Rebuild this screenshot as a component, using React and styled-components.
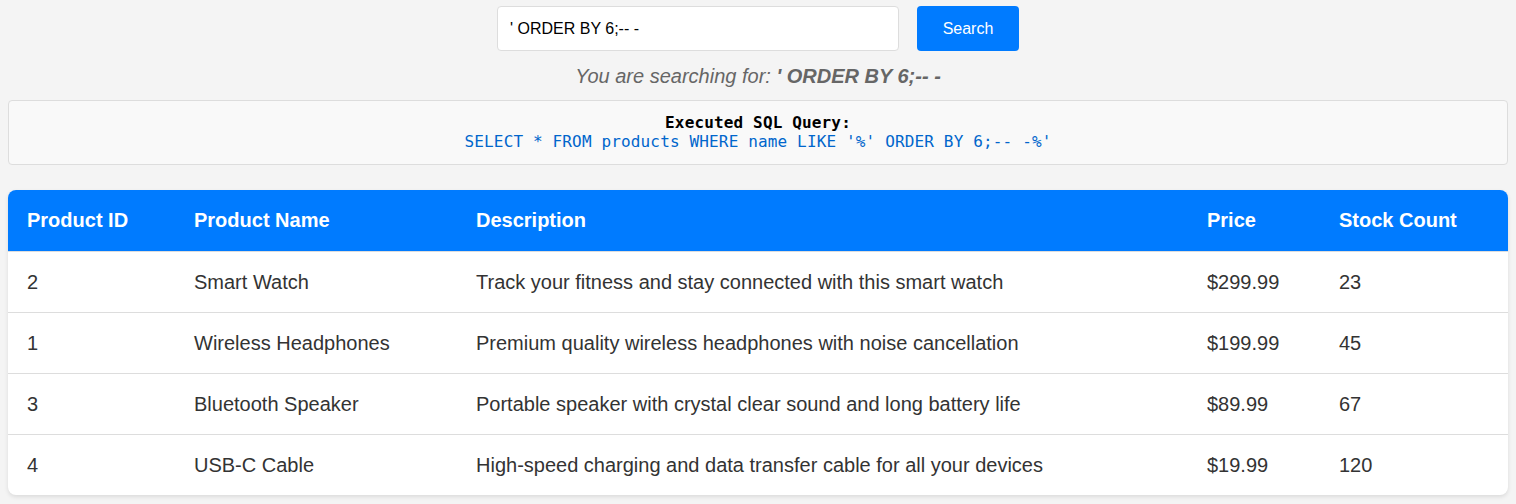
import styled, { createGlobalStyle } from "styled-components";

const GlobalStyle = createGlobalStyle`
    body {
        margin: 0;
        background: #f4f4f4;
        font-family: "Liberation Sans", Arial, Helvetica, sans-serif;
    }
`;

const products = [
    { id: 2, name: "Smart Watch", description: "Track your fitness and stay connected with this smart watch", price: "$299.99", stock: 23 },
    { id: 1, name: "Wireless Headphones", description: "Premium quality wireless headphones with noise cancellation", price: "$199.99", stock: 45 },
    { id: 3, name: "Bluetooth Speaker", description: "Portable speaker with crystal clear sound and long battery life", price: "$89.99", stock: 67 },
    { id: 4, name: "USB-C Cable", description: "High-speed charging and data transfer cable for all your devices", price: "$19.99", stock: 120 },
];

const columns = [
    { label: "Product ID", width: 167 },
    { label: "Product Name", width: 282 },
    { label: "Description", width: 731 },
    { label: "Price", width: 132 },
    { label: "Stock Count", width: 188 },
];

const query = "' ORDER BY 6;-- -";

export default function App() {
    return (
        <Page>
            <GlobalStyle />
            <SearchForm onSubmit={(e) => e.preventDefault()}>
                <SearchInput defaultValue={query} />
                <SearchButton type="submit">Search</SearchButton>
            </SearchForm>
            <SearchingFor>
                You are searching for: <strong>{query}</strong>
            </SearchingFor>
            <QueryBox>
                <QueryTitle>Executed SQL Query:</QueryTitle>
                <QueryText>
                    SELECT * FROM products WHERE name LIKE '%{query}%'
                </QueryText>
            </QueryBox>
            <Table>
                <colgroup>
                    {columns.map((c) => (
                        <col key={c.label} style={{ width: c.width }} />
                    ))}
                </colgroup>
                <thead>
                    <tr>
                        {columns.map((c) => (
                            <th key={c.label}>{c.label}</th>
                        ))}
                    </tr>
                </thead>
                <tbody>
                    {products.map((p) => (
                        <tr key={p.id}>
                            <td>{p.id}</td>
                            <td>{p.name}</td>
                            <td>{p.description}</td>
                            <td>{p.price}</td>
                            <td>{p.stock}</td>
                        </tr>
                    ))}
                </tbody>
            </Table>
        </Page>
    );
}

const Page = styled.div`
    padding: 6px 8px 8px;
`;

const SearchForm = styled.form`
    display: flex;
    justify-content: center;
    gap: 18px;
    margin: 0;
`;

const SearchInput = styled.input`
    box-sizing: border-box;
    width: 402px;
    height: 45px;
    padding: 0 12px;
    border: 1px solid #ddd;
    border-radius: 4px;
    background: #fff;
    font-family: "Liberation Sans", Arial, sans-serif;
    font-size: 16px;
    color: #000;
    outline: none;
`;

const SearchButton = styled.button`
    box-sizing: border-box;
    width: 102px;
    height: 45px;
    border: none;
    border-radius: 4px;
    background: #007bff;
    color: #fff;
    font-family: "Liberation Sans", Arial, sans-serif;
    font-size: 16px;
    cursor: pointer;
`;

const SearchingFor = styled.p`
    margin: 14px 0 0;
    text-align: center;
    font-size: 20px;
    font-style: italic;
    color: #666;
    line-height: 23px;
`;

const QueryBox = styled.div`
    margin-top: 12px;
    padding: 12px 12px 13px;
    background: #f9f9f9;
    border: 1px solid #ddd;
    border-radius: 4px;
    text-align: center;
    font-family: "DejaVu Sans Mono", monospace;
    font-size: 16px;
    letter-spacing: 0.15px;
    line-height: 19px;
`;

const QueryTitle = styled.div`
    font-weight: bold;
    color: #000;
`;

const QueryText = styled.div`
    color: #0066cc;
    white-space: pre;
`;

const Table = styled.table`
    width: 100%;
    margin-top: 25px;
    table-layout: fixed;
    border-collapse: collapse;
    background: #fff;
    border-radius: 8px;
    overflow: hidden;
    box-shadow: 0 2px 4px rgba(0, 0, 0, 0.1);

    th,
    td {
        padding: 19px;
        text-align: left;
        font-size: 20px;
        line-height: 23px;
    }

    th {
        background: #007bff;
        color: #fff;
        font-weight: bold;
    }

    td {
        padding-bottom: 18px;
        color: #333;
        border-top: 1px solid #ddd;
    }
`;
